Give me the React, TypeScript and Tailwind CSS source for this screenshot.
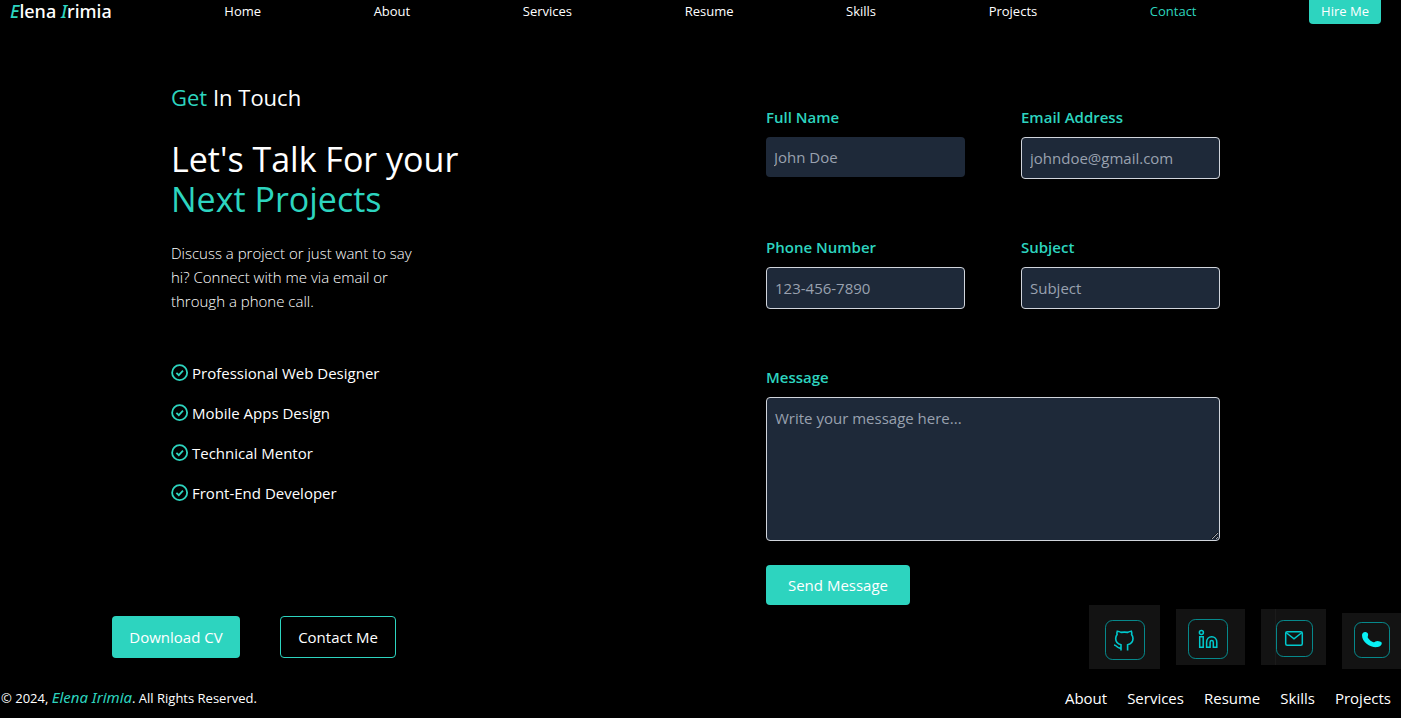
import type { ReactNode } from "react";

const navLinks = ["Home", "About", "Services", "Resume", "Skills", "Projects", "Contact"];
const footerLinks = ["About", "Services", "Resume", "Skills", "Projects"];
const strengths = [
  "Professional Web Designer",
  "Mobile Apps Design",
  "Technical Mentor",
  "Front-End Developer",
];

const labelClass = "block font-semibold text-[#2dd4bf]";
const fieldClass =
  "mt-2 block w-full rounded border-gray-300 bg-gray-800 p-2 leading-6 text-white placeholder:text-gray-400";

function CheckCircle() {
  return (
    <svg className="size-[18px] shrink-0 text-[#2dd4bf]" viewBox="0 0 24 24" fill="none" stroke="currentColor" strokeWidth="2.4" aria-hidden="true">
      <circle cx="11.5" cy="11.5" r="10" />
      <path d="M7.2 11.7l3.200 3.100 5.600-5.900" />
    </svg>
  );
}

function Field({ id, label, type, placeholder, bordered = true }: {
  id: string;
  label: string;
  type: string;
  placeholder: string;
  bordered?: boolean;
}) {
  return (
    <div>
      <label htmlFor={id} className={labelClass}>{label}</label>
      <input id={id} type={type} placeholder={placeholder} className={`${fieldClass} ${bordered ? "border" : "border-0"}`} />
    </div>
  );
}

function SocialLink({ label, className, children }: { label: string; className: string; children: ReactNode }) {
  return (
    <a href="#" aria-label={label} className={`flex shrink-0 bg-[#131313] ${className}`}>
      {children}
    </a>
  );
}

export default function App() {
  return (
    <div className="min-h-screen bg-black font-['Segoe_UI','Open_Sans',sans-serif] text-[15px] leading-6 text-white">
      <header>
        <nav className="flex items-start justify-between pr-5 pl-[10px] text-[13px] leading-[22px]">
          <a href="#" className="font-['Comic_Sans_MS','Noto_Sans',sans-serif] text-[18px] font-medium leading-[22px]">
            <span className="italic text-[#2dd4bf]">E</span>lena{" "}
            <span className="italic text-[#2dd4bf]">I</span>rimia
          </a>
          {navLinks.map((link) => (
            <a key={link} href="#" className={link === "Contact" ? "text-[#2dd4bf]" : ""}>{link}</a>
          ))}
          <button type="button" className="rounded-b bg-[#2dd4bf] px-3 pb-[2px]">Hire Me</button>
        </nav>
      </header>

      <main>
        <section className="flex justify-between pt-[57px] pr-[181px] pl-[171px]">
          <div>
            <h2 className="text-[22px] leading-8"><span className="text-[#2dd4bf]">Get</span> In Touch</h2>
            <h1 className="mt-[26px] text-[34px] leading-10">
              Let&apos;s Talk For your
              <br />
              <span className="text-[#2dd4bf]">Next Projects</span>
            </h1>
            <p className="mt-[22px] w-64 font-light">
              Discuss a project or just want to say hi? Connect with me via email or through a phone call.
            </p>
            <ul className="mt-12 flex flex-col gap-4">
              {strengths.map((item) => (
                <li key={item} className="flex items-center gap-[3px]"><CheckCircle />{item}</li>
              ))}
            </ul>
          </div>

          <form className="w-[454px] pt-6">
            <div className="grid grid-cols-2 gap-14">
              <Field id="name" label="Full Name" type="text" placeholder="John Doe" bordered={false} />
              <Field id="email" label="Email Address" type="email" placeholder="johndoe@gmail.com" />
              <Field id="phone" label="Phone Number" type="tel" placeholder="123-456-7890" />
              <Field id="subject" label="Subject" type="text" placeholder="Subject" />
              <div className="col-span-2">
                <label htmlFor="message" className={labelClass}>Message</label>
                <textarea id="message" placeholder="Write your message here..." className={`${fieldClass} h-36 border`} />
              </div>
            </div>
            <button type="submit" className="mt-6 h-10 w-36 rounded bg-[#2dd4bf]">Send Message</button>
          </form>
        </section>

        <div className="flex items-start justify-between">
          <div className="flex gap-10 pt-[11px] pl-28">
            <button type="button" className="h-[42px] w-32 rounded bg-[#2dd4bf]">Download CV</button>
            <button type="button" className="h-[42px] w-[116px] rounded border border-[#2dd4bf]">Contact Me</button>
          </div>
          <div className="flex h-16 items-center gap-4">
            <SocialLink label="GitHub" className="h-16 w-[71px] pt-[15px] pl-4">
              <svg className="size-10" viewBox="0 0 40 40" fill="none" stroke="#00c8cc" aria-hidden="true">
                <rect x=".5" y=".5" width="39" height="39" rx="7" strokeOpacity=".65" />
                <path strokeWidth="1.6" d="M16 30.500v-5.700c-3.400-.9-5.300-3.300-5.300-6.300 0-1.700.5-3 1.400-4.100-.4-1.100-.2-2.300.2-3.200 1.300.1 2.600.5 3.700 1.200 2.200-.4 4.500-.4 6.700 0 1.100-.7 2.400-1.100 3.700-1.200.4.9.6 2.100.2 3.200.9 1.100 1.400 2.400 1.400 4.100 0 3-2 5.400-5.400 6.300v5.700M16 28c-4 1-4-2.900-7-3" />
              </svg>
            </SocialLink>
            <SocialLink label="LinkedIn" className="h-14 w-[69px] pt-[10px] pl-3">
              <svg className="size-10" viewBox="0 0 40 40" fill="none" stroke="#00c8cc" aria-hidden="true">
                <rect x=".5" y=".5" width="39" height="39" rx="7" strokeOpacity=".65" />
                <circle cx="13.4" cy="13.4" r="2" strokeWidth="1.5" />
                <path strokeWidth="1.5" d="M11.7 17.700h3.500v10.600h-3.500zM18.600 28.300v-5c0-3.400 2.200-5.600 5.100-5.600s5.100 2.200 5.100 5.600v5h-3.500v-5c0-2.300-3.200-2.300-3.200 0v5z" />
              </svg>
            </SocialLink>
            <SocialLink label="Email" className="h-14 w-[65px]">
              <span className="w-[15px] border-r border-[#1b1b1b]" />
              <svg className="mt-[11px] size-[37px]" viewBox="0 0 37 37" fill="none" stroke="#00c8cc" aria-hidden="true">
                <rect x=".5" y=".5" width="36" height="36" rx="7" strokeOpacity=".65" />
                <rect x="9.7" y="11.7" width="16.6" height="13.6" rx="1.5" strokeWidth="1.5" />
                <path strokeWidth="1.5" d="M10 12.500l8 6.400 8-6.400" />
              </svg>
            </SocialLink>
            <SocialLink label="Phone" className="mt-2 h-14 w-[59px] pt-[9px] pl-3">
              <svg className="size-9" viewBox="0 0 36 36" fill="none" aria-hidden="true">
                <rect x=".5" y=".5" width="35" height="35" rx="7" stroke="#00c8cc" strokeOpacity=".65" />
                <path fill="#08f0f4" d="M8 13.200c0-2 1.500-3.400 3.600-3.200 2 .2 3 2 2.400 3.800-.4 1.100-.4 1.600.2 2.500 1.400 2 3.100 3.200 5.200 3.900.9.300 1.400.1 2-.6 1.600-1.500 5.200-.4 6.400 1.100.2 1.900-1.600 3.700-4.100 4.300-6.500 1.100-15.700-4.400-15.700-11.800z" />
              </svg>
            </SocialLink>
          </div>
        </div>
      </main>

      <footer className="flex items-center justify-between pt-4 pr-[10px] pl-px">
        <p className="text-[13px]">
          © 2024,{" "}
          <span className="font-['Comic_Sans_MS','Noto_Sans',sans-serif] text-[15px] italic text-[#2dd4bf]">Elena Irimia</span>
          . All Rights Reserved.
        </p>
        <nav className="flex gap-5">
          {footerLinks.map((link) => <a key={link} href="#">{link}</a>)}
        </nav>
      </footer>
    </div>
  );
}
